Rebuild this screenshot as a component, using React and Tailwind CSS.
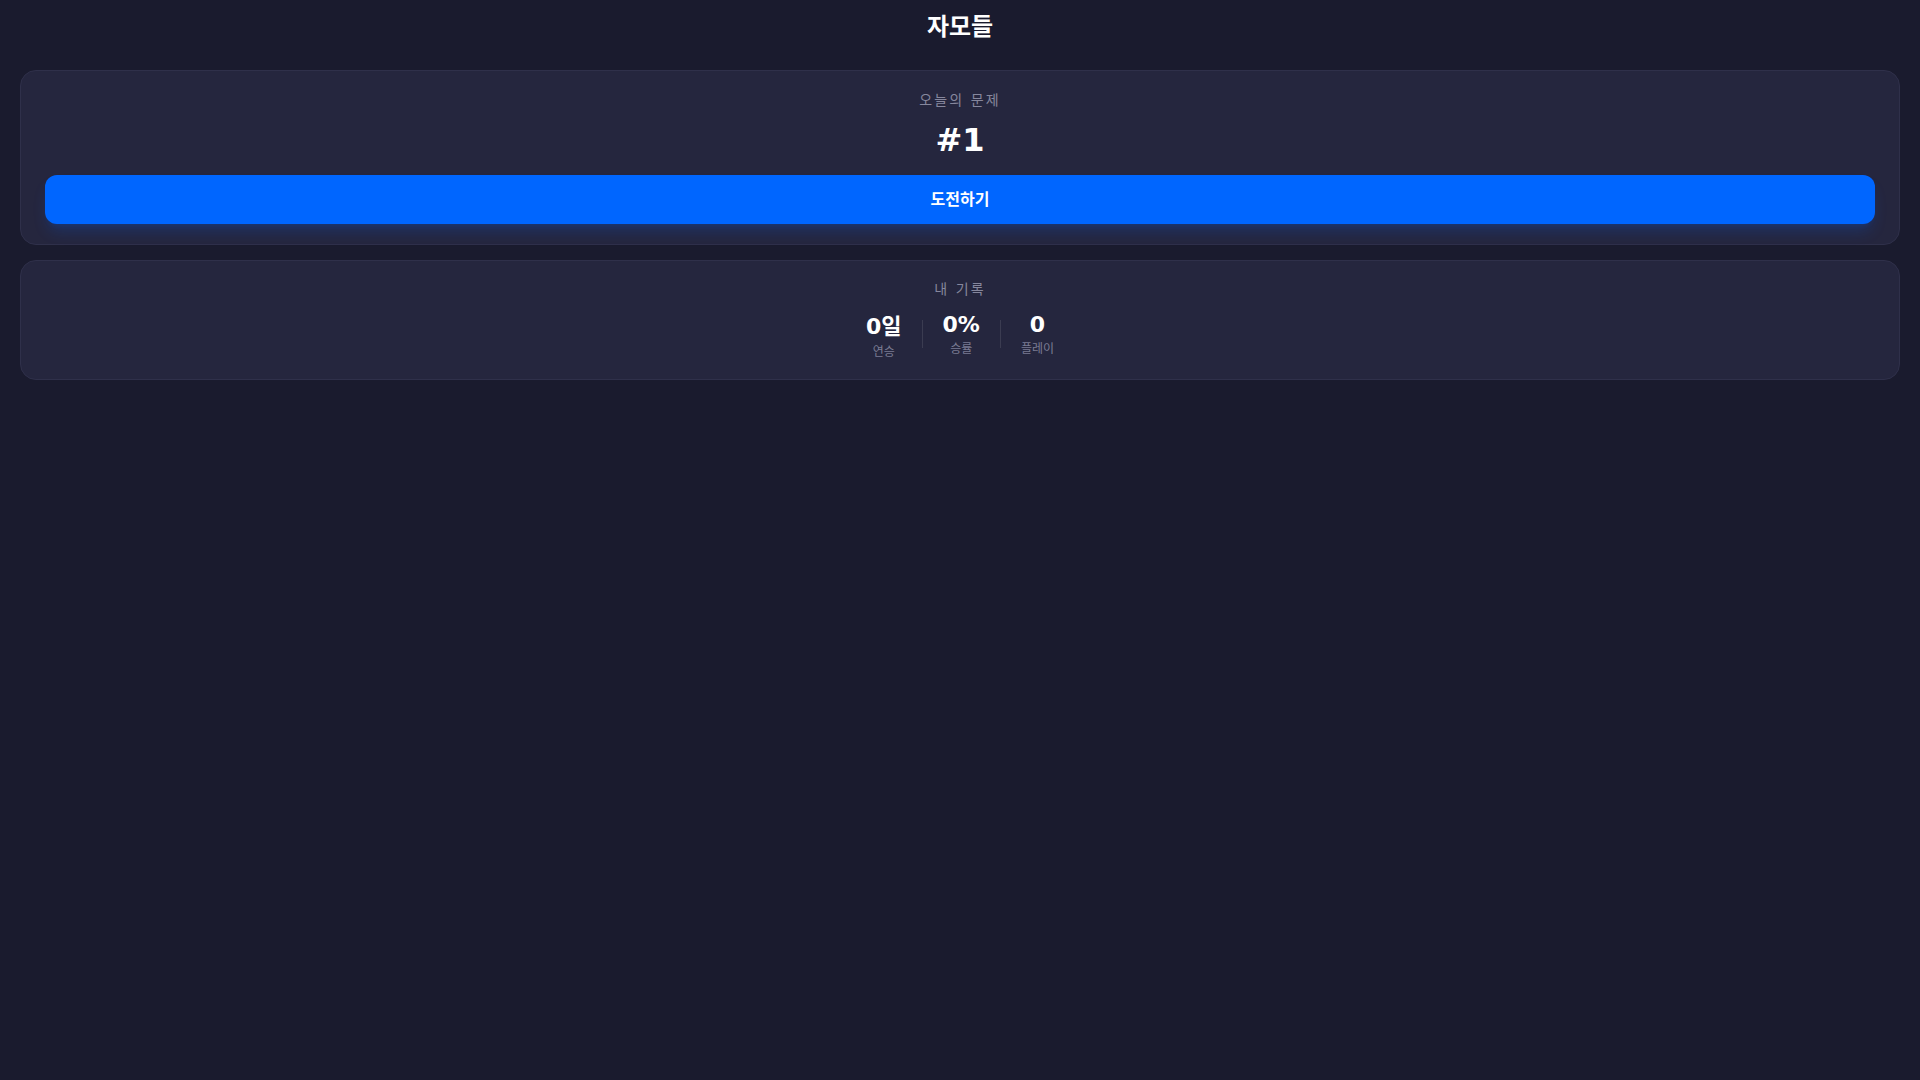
import React from 'react'

const FONT = { fontFamily: '"DejaVu Sans", "Noto Sans CJK KR", sans-serif' }

function Stat({ value, label }) {
  return (
    <div className="flex flex-col items-center px-5">
      <div className="text-[22px] font-bold leading-[normal] text-white">{value}</div>
      <div className="mt-1 text-xs leading-4 text-[#7b7c93]">{label}</div>
    </div>
  )
}

export default function App() {
  return (
    <div className="min-h-screen bg-[#1a1b2e] text-white" style={FONT}>
      <header className="flex h-[54px] items-center justify-center">
        <h1 className="text-2xl font-bold leading-8">자모들</h1>
      </header>

      <main className="flex flex-col gap-[15px] px-5 pt-4">
        {/* 오늘의 문제 */}
        <section className="flex flex-col items-center rounded-2xl border border-[#2f304a] bg-[#25263e] px-6 pt-[19px] pb-5">
          <div className="text-sm leading-5 tracking-[0.15em] text-[#86879d]">오늘의 문제</div>
          <div className="mt-[11px] text-[32px] font-bold leading-[1.2]">#1</div>
          <button className="mt-4 w-full rounded-xl bg-[#0066ff] py-[12.5px] text-base font-semibold leading-6 text-white shadow-lg shadow-[#0066ff]/20">
            도전하기
          </button>
        </section>

        {/* 내 기록 */}
        <section className="flex flex-col items-center rounded-2xl border border-[#2f304a] bg-[#25263e] px-6 pt-[18px] pb-[19px]">
          <div className="text-sm leading-5 tracking-[0.15em] text-[#86879d]">내 기록</div>
          <div className="mt-[9px] flex items-center">
            <Stat value="0일" label="연승" />
            <div className="h-7 w-px bg-white/10" />
            <Stat value="0%" label="승률" />
            <div className="h-7 w-px bg-white/10" />
            <Stat value="0" label="플레이" />
          </div>
        </section>
      </main>
    </div>
  )
}
